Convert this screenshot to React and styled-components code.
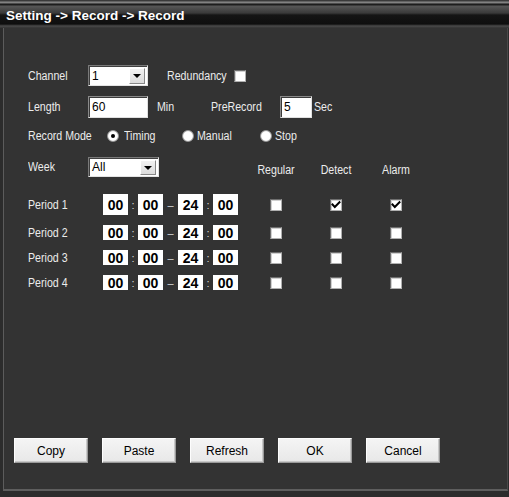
import React from "react";
import styled, { createGlobalStyle } from "styled-components";

const GlobalStyle = createGlobalStyle`
  html, body {
    margin: 0;
    padding: 0;
    background: #2c2c2c;
  }
`;

const Window = styled.div`
  width: 509px;
  height: 497px;
  background: #2c2c2c;
  display: flex;
  flex-direction: column;
  font-family: "Liberation Sans", Arial, sans-serif;
  overflow: hidden;
`;

const TitleBar = styled.div`
  height: 28px;
  flex-shrink: 0;
  box-sizing: border-box;
  padding: 2px 0 0 6px;
  display: flex;
  align-items: center;
  color: #fff;
  font-size: 13.5px;
  font-weight: bold;
  background: linear-gradient(
    180deg,
    #3a3a3a 0px,
    #3a3a3a 1px,
    #8a8a8a 2px,
    #7a7a7a 3px,
    #1c1c1c 4px,
    #1e1e1e 5px,
    #575757 6px,
    #3a3a3a 13px,
    #151515 15px,
    #0e0e0e 24px,
    #4a4a4a 26px,
    #333 28px
  );
`;

const Body = styled.div`
  flex: 1;
  margin: 0 1px 6px 3px;
  background: #333;
  border-left: 1px solid #5c5c5c;
  border-right: 1px solid #484848;
  border-bottom: 2px solid #5e5e5e;
  display: flex;
  flex-direction: column;
`;

const Form = styled.div`
  padding: 37px 0 0 24px;
  display: flex;
  flex-direction: column;
`;

const Row = styled.div`
  display: flex;
  align-items: center;
  height: ${(p) => p.$h}px;
  margin-top: ${(p) => p.$mt || 0}px;
`;

/* the dialog font is a tall, narrow sans: squeeze a 12.5px face sideways */
const Label = styled.span`
  display: inline-block;
  width: ${(p) => (p.$w ? `${p.$w}px` : "auto")};
  flex-shrink: 0;
  margin-left: ${(p) => p.$ml || 0}px;
  color: #ececec;
  font-size: 12.5px;
  white-space: nowrap;
  transform: scaleX(0.85);
  transform-origin: left center;
`;

const Select = styled.div`
  position: relative;
  width: ${(p) => p.$w}px;
  height: ${(p) => p.$h}px;
  box-sizing: border-box;
  background: #fff;
  border: 1px solid;
  border-color: #7a7a7a #e4e4e4 #e4e4e4 #7a7a7a;
  box-shadow: inset 1px 1px 0 #404040;
  display: flex;
  align-items: center;
  padding-left: 3px;
  font-size: 12px;
  color: #000;
`;

const Arrow = styled.span`
  position: absolute;
  top: 2px;
  right: 2px;
  bottom: 1px;
  width: 16px;
  box-sizing: border-box;
  background: linear-gradient(#f2f2f2, #dcdcdc);
  border: 1px solid;
  border-color: #fff #888 #888 #fff;
  display: flex;
  align-items: center;
  justify-content: center;

  &::after {
    content: "";
    border-left: 4px solid transparent;
    border-right: 4px solid transparent;
    border-top: 4px solid #000;
  }
`;

const TextInput = styled.div`
  width: ${(p) => p.$w}px;
  height: 22px;
  box-sizing: border-box;
  background: #fff;
  border: 1px solid;
  border-color: #8a8a8a #e0e0e0 #e0e0e0 #8a8a8a;
  box-shadow: inset 1px 1px 0 #3c3c3c;
  display: flex;
  align-items: center;
  padding-left: 3px;
  font-size: 12px;
  color: #000;
  flex-shrink: 0;
`;

const Box = styled.span`
  width: 12px;
  height: 12px;
  box-sizing: border-box;
  flex-shrink: 0;
  margin-left: ${(p) => p.$ml || 0}px;
  background: #fff;
  border: 1px solid;
  border-color: #6e6e6e #b0b0b0 #b0b0b0 #6e6e6e;
  box-shadow: inset 1px 1px 0 #d0d0d0;
  display: flex;
  align-items: center;
  justify-content: center;
`;

const Option = styled.span`
  width: ${(p) => p.$w}px;
  display: flex;
  align-items: center;
  gap: ${(p) => p.$gap}px;
  flex-shrink: 0;
`;

const Radio = styled.span`
  width: 12px;
  height: 12px;
  box-sizing: border-box;
  flex-shrink: 0;
  border-radius: 50%;
  background: radial-gradient(circle, #fff 55%, #dcdcdc 100%);
  border: 1px solid #9a9a9a;
  display: flex;
  align-items: center;
  justify-content: center;

  &::after {
    content: "";
    width: 4px;
    height: 4px;
    border-radius: 50%;
    background: ${(p) => (p.$on ? "#000" : "transparent")};
  }
`;

const Grid = styled.div`
  display: grid;
  grid-template-columns: ${(p) => p.$cols};
  align-items: center;
  height: ${(p) => p.$h}px;
  margin-top: ${(p) => p.$mt || 0}px;
`;

const Head = styled.span`
  color: #ececec;
  font-size: 12.5px;
  text-align: center;
  padding-top: 6px;
  white-space: nowrap;
  transform: scaleX(0.85);
`;

const Cell = styled.span`
  display: flex;
  justify-content: center;
`;

const TimeGroup = styled.span`
  display: flex;
  align-items: center;
`;

const TimeBox = styled.span`
  width: 25px;
  height: ${(p) => (p.$tall ? 21 : 15)}px;
  background: #fff;
  color: #000;
  font-weight: bold;
  font-size: 14px;
  display: flex;
  align-items: center;
  justify-content: center;
`;

const Sep = styled.span`
  width: ${(p) => p.$w}px;
  text-align: center;
  color: #d8d8d8;
  font-size: 11px;
`;

const ButtonBar = styled.div`
  margin-top: auto;
  display: flex;
  gap: 14px;
  padding: 0 0 26px 10px;
`;

const Button = styled.button`
  width: 74px;
  height: 25px;
  box-sizing: border-box;
  background: linear-gradient(#f4f4f4, #e8e8e8);
  border: 1px solid;
  border-color: #fdfdfd #9a9a9a #9a9a9a #fdfdfd;
  box-shadow: inset -1px -1px 0 #c8c8c8;
  font-family: "Liberation Sans", Arial, sans-serif;
  font-size: 12px;
  color: #000;
  padding: 0;
`;

const Check = () => (
  <svg width="10" height="10" viewBox="0 0 10 10">
    <path
      d="M1.5 4.5 L3.8 7 L8.5 2.2"
      fill="none"
      stroke="#000"
      strokeWidth="2"
      strokeLinecap="square"
    />
  </svg>
);

const periods = [
  { name: "Period 1", tall: true, regular: false, detect: true, alarm: true },
  { name: "Period 2", regular: false, detect: false, alarm: false },
  { name: "Period 3", regular: false, detect: false, alarm: false },
  { name: "Period 4", regular: false, detect: false, alarm: false },
];

const CheckBox = ({ on, ml }) => <Box $ml={ml}>{on && <Check />}</Box>;

export default function App() {
  return (
    <>
      <GlobalStyle />
      <Window>
        <TitleBar>Setting -&gt; Record -&gt; Record</TitleBar>
        <Body>
          <Form>
            <Row $h={21}>
              <Label $w={60}>Channel</Label>
              <Select $w={60} $h={21}>
                1
                <Arrow />
              </Select>
              <Label $w={61} $ml={19}>
                Redundancy
              </Label>
              <CheckBox ml={6} />
            </Row>

            <Row $h={22} $mt={10}>
              <Label $w={60}>Length</Label>
              <TextInput $w={60}>60</TextInput>
              <Label $w={54} $ml={9}>
                Min
              </Label>
              <Label $w={69}>PreRecord</Label>
              <TextInput $w={32}>5</TextInput>
              <Label $ml={2}>Sec</Label>
            </Row>

            <Row $h={20} $mt={8}>
              <Label $w={79}>Record Mode</Label>
              <Option $w={75} $gap={5}>
                <Radio $on />
                <Label>Timing</Label>
              </Option>
              <Option $w={78} $gap={3}>
                <Radio />
                <Label>Manual</Label>
              </Option>
              <Option $w={60} $gap={3}>
                <Radio />
                <Label>Stop</Label>
              </Option>
            </Row>

            <Grid $cols="60px 158px 60px 60px 60px" $h={20} $mt={11}>
              <Label>Week</Label>
              <Select $w={71} $h={20}>
                All
                <Arrow />
              </Select>
              <Head>Regular</Head>
              <Head>Detect</Head>
              <Head>Alarm</Head>
            </Grid>

            {periods.map((p, i) => (
              <Grid
                key={p.name}
                $cols="75px 143px 60px 60px 60px"
                $h={25}
                $mt={i === 0 ? 15 : i === 1 ? 3 : 0}
              >
                <Label>{p.name}</Label>
                <TimeGroup>
                  <TimeBox $tall={p.tall}>00</TimeBox>
                  <Sep $w={10}>:</Sep>
                  <TimeBox $tall={p.tall}>00</TimeBox>
                  <Sep $w={15}>–</Sep>
                  <TimeBox $tall={p.tall}>24</TimeBox>
                  <Sep $w={10}>:</Sep>
                  <TimeBox $tall={p.tall}>00</TimeBox>
                </TimeGroup>
                <Cell>
                  <CheckBox on={p.regular} />
                </Cell>
                <Cell>
                  <CheckBox on={p.detect} />
                </Cell>
                <Cell>
                  <CheckBox on={p.alarm} />
                </Cell>
              </Grid>
            ))}
          </Form>

          <ButtonBar>
            <Button>Copy</Button>
            <Button>Paste</Button>
            <Button>Refresh</Button>
            <Button>OK</Button>
            <Button>Cancel</Button>
          </ButtonBar>
        </Body>
      </Window>
    </>
  );
}
